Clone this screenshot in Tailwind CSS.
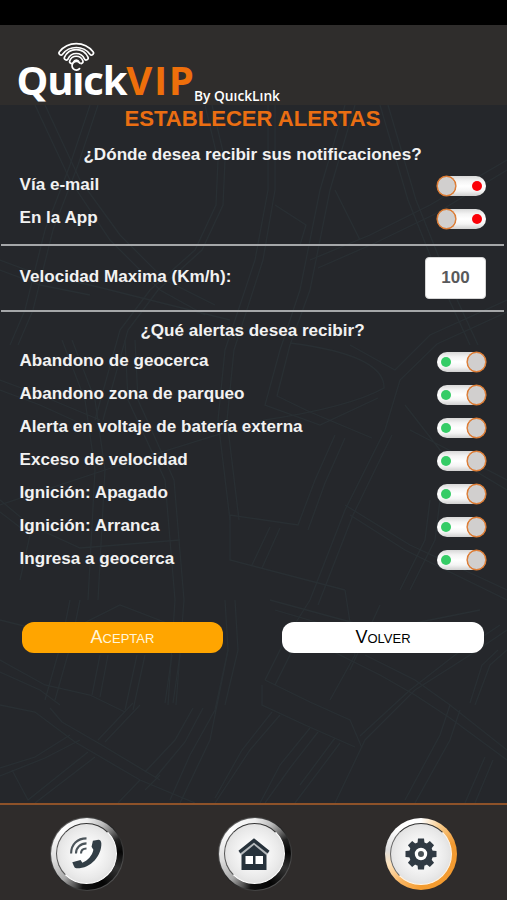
<!DOCTYPE html>
<html lang="es">
<head>
    <meta charset="UTF-8">
    <meta name="viewport" content="width=device-width, initial-scale=1.0">
    <title>Establecer Alertas</title>
    <script src="https://cdn.jsdelivr.net/npm/@tailwindcss/browser@4"></script>
</head>

<body class="bg-black font-['Liberation_Sans',Arial,sans-serif]">
<div class="w-[507px] h-[900px] flex flex-col overflow-hidden">

    <!-- status bar -->
    <div class="h-[25px] bg-black shrink-0"></div>

    <!-- header -->
    <header class="relative z-10 h-[80px] bg-[#2f2d2c] shrink-0">
        <svg class="overflow-visible" width="300" height="80" viewBox="0 25 300 80" role="img" aria-label="QuickVIP">
            <g fill="none" stroke="#fff" stroke-linecap="round">
                <g stroke-width="5.600">
                    <path d="M61 53A19.300 19.300 0 0 1 91.500 53"/>
                    <path d="M66.300 58A10.900 10.900 0 0 1 86.200 58"/>
                    <path d="M71.600 61.500A5 5 0 0 1 81 61.500"/>
                </g>
                <g stroke="#2f2d2c" stroke-width="2.300">
                    <path d="M61 53A19.300 19.300 0 0 1 91.500 53"/>
                    <path d="M66.300 58A10.900 10.900 0 0 1 86.200 58"/>
                    <path d="M71.600 61.500A5 5 0 0 1 81 61.500"/>
                </g>
                <circle cx="76.300" cy="65.800" r="4.500" fill="#2f2d2c" stroke="none"/>
                <path d="M79.600 63A4.300 4.300 0 1 0 79.600 68.600" stroke-width="1.700"/>
            </g>
            <text x="16.500" y="95" fill="#fff" font-family="Open Sans, sans-serif" font-weight="700" font-size="40" textLength="179" lengthAdjust="spacingAndGlyphs"><tspan class="tracking-[-1.2px]">Quıck</tspan><tspan class="tracking-[1.6px]" fill="#ee6f0b">VIP</tspan></text>
            <text x="194" y="101" fill="#fff" font-family="Open Sans, sans-serif" font-weight="600" font-size="14" textLength="86" lengthAdjust="spacingAndGlyphs">By QuıckLınk</text>
        </svg>
    </header>

    <main class="relative h-[698px] shrink-0 bg-[#25272b] text-[#f2f2f2]">

        <!-- street map behind the form -->
        <svg class="absolute inset-0" width="507" height="698" viewBox="0 105 507 698" fill="none" stroke="#292f33" stroke-width="1.300">
            <path d="M35 105L70 180 110 240 160 290 205 315M45 105L80 180 120 235 165 280 215 305"/>
            <path d="M90 105L70 165 45 230 25 310 10 345M98 105L78 165 53 230 33 310 18 345"/>
            <path d="M205 105L218 160 216 205 195 250 150 290 120 330 95 420M212 105L225 160 223 205 202 250 158 290 128 330 103 420"/>
            <path d="M268 105V190L255 260 225 350 218 420 230 520M275 105V190L263 260 234 350 227 420 239 520"/>
            <path d="M345 105L320 190 300 290 280 350 265 405 320 425 378 398M355 105L330 190 310 290 290 345 277 396 310 412 372 438"/>
            <path d="M380 105L408 200 440 280 470 345M388 105L416 200 448 280 478 345"/>
            <path d="M507 160L430 205 370 235 310 260M507 170L435 214 375 243 318 268"/>
            <path d="M275 205L306 225 300 245M335 190L360 240"/>
            <path d="M0 260L40 275 90 285 150 300 230 320M0 270L40 285 90 295"/>
            <path d="M507 300L430 335 395 370 350 345M507 312L437 344 400 380 385 430 345 510 310 600M392 435L353 515 318 605"/>
            <path d="M290 343Q385 355 384 388Q350 407 265 420 L120 465 0 505"/>
            <path d="M0 380L40 395 100 420M0 390L40 405 95 430M62 340L85 400 95 470 88 600M72 340L95 400 105 470 98 600"/>
            <path d="M125 340L128 400 165 480 175 600 168 705M135 340L138 400 174 480 184 600 176 705"/>
            <path d="M335 435L315 480 298 525 230 515V560L345 590M345 438L325 483 308 530M270 527L252 565M280 528L262 568"/>
            <path d="M345 505L410 545 507 590M350 515L405 550 507 600M430 500L425 540 400 590M440 500L435 540 410 590"/>
            <path d="M0 500L30 525 80 548 180 540M0 512L30 535 20 580M410 430L507 480M405 405L440 450 507 490"/>
            <path d="M70 600L62 640 45 700M80 600L72 640 55 700M0 620L60 635 120 605 185 630M0 660L45 685 90 695 125 712M0 672L40 690 60 705"/>
            <path d="M100 655L92 695M108 655L100 697M137 655L125 710M145 655L133 710M172 655L165 703M180 655L173 703M225 600L228 650 215 710M235 600L238 650 225 705"/>
            <path d="M0 705L35 712 75 742 140 780 195 803M50 708L62 722 100 744 160 780M140 705L105 742M133 703L98 740"/>
            <path d="M0 768L35 757 70 735M0 776L45 758 80 740M12 770L28 800 88 752M35 803L95 757M140 780L118 803M160 775L145 790"/>
            <path d="M193 708L175 740 145 772M203 708L185 742 155 778M215 710L190 755 170 800M228 650L210 740 180 803"/>
            <path d="M280 715L250 750 215 803M272 712L242 750 215 798M310 728L280 765 260 803M318 732L290 768 265 803M335 738L300 785M340 743L295 803"/>
            <path d="M265 680L310 702 350 720 362 748M262 685V705L305 725 355 747M265 680L285 640 310 600M295 645L275 685"/>
            <path d="M507 630L470 655 415 690 365 740 335 803M500 625L455 655 410 690 360 736M345 590L355 655 330 700M380 605L350 670"/>
            <path d="M330 650L380 675 415 695 450 718 507 760M365 655L415 680 450 705 507 750M450 705L440 735 405 800M460 710L450 740 415 803M485 757L465 803M493 760L475 803"/>
            <path d="M507 650L490 665 475 705M498 650L482 665 470 703M270 600L380 630 480 610M275 610L370 638"/>
        </svg>

        <form class="relative flex flex-col" onsubmit="return false">
            <h1 class="h-[28px] leading-[28px] pr-[2px] text-center text-[22.1px] font-bold text-[#ea6e12]">ESTABLECER ALERTAS</h1>
            <h2 class="h-[35px] pt-[4px] pr-[2px] leading-[35px] text-center text-[17.1px] font-bold">¿Dónde desea recibir sus notificaciones?</h2>
            <div id="channels"></div>

            <div class="h-[2px] mt-[10px] ml-px mr-[3px] bg-[#a5a7a9]"></div>

            <div class="h-[64px] flex justify-between items-center pl-[19.5px] pr-[21px]">
                <label for="speed" class="text-[17.1px] font-bold -mt-[3px]">Velocidad Maxima (Km/h):</label>
                <input id="speed" type="text" value="100" class="w-[61px] h-[42px] -mt-px rounded-[4px] bg-white border border-[#d5d5d5] text-center text-[17px] font-bold text-[#58595b]">
            </div>

            <div class="h-[2px] ml-px mr-[3px] bg-[#a5a7a9]"></div>

            <h2 class="h-[32px] pt-[2px] pr-[2px] leading-[33px] text-center text-[17.1px] font-bold">¿Qué alertas desea recibir?</h2>
            <div id="alerts"></div>

            <div class="flex justify-between mt-[47px] pl-[22px] pr-[23px]">
                <button class="w-[201px] h-[31px] rounded-[12px] bg-[#ffa500] text-[#fff6dc] text-[18px] [font-variant:small-caps]">Aceptar</button>
                <button class="w-[202px] h-[31px] rounded-[12px] bg-white text-black text-[18px] [font-variant:small-caps]">Volver</button>
            </div>
        </form>
    </main>

    <footer class="h-[97px] shrink-0 bg-[#2f2c2b] border-t-2 border-[#8e5229] flex justify-between px-[50px] pt-[12px]">

        <!-- phone -->
        <a href="#" class="w-[74px] h-[74px] rounded-full p-px bg-[linear-gradient(135deg,#777,#222_50%,#666)]">
            <div class="w-[72px] h-[72px] rounded-full p-[5px] bg-[conic-gradient(from_0deg,#eee,#bbb_8%,#777_13%,#222_18%,#050505_24%,#333_32%,#050505_42%,#111_52%,#555_56%,#aaa_62%,#ddd_72%,#fff_87%,#eee)]">
                <div class="w-[61px] h-[61px] rounded-full border-[1.5px] border-t-[#333] border-l-[#555] border-r-white border-b-white bg-[radial-gradient(circle,#fff_15%,#e9e9e9_60%,#cfcfcf)] flex items-center justify-center">
                    <svg width="33" height="33" viewBox="0 0 36 36">
                        <path d="M25 4L31 3Q34 3.300 34.200 7C34.500 20 23 34.500 7 34.200Q5 34 4.200 31.500L2.500 27.500L11.500 25L13.500 28C19 26.500 24.500 20 25.500 14L23.500 10.500Z" fill="#323e46"/>
                        <g fill="none" stroke="#4b545a" stroke-width="2.300">
                            <path d="M1.200 18C1.200 8 8 1.500 18 1.500"/>
                            <path d="M6.500 18C6.500 11.500 11.500 7 18 7"/>
                            <path d="M12 18C12 14.500 14.500 12.500 18 12.500"/>
                        </g>
                    </svg>
                </div>
            </div>
        </a>

        <!-- home -->
        <a href="#" class="w-[74px] h-[74px] rounded-full p-px bg-[linear-gradient(135deg,#777,#222_50%,#666)]">
            <div class="w-[72px] h-[72px] rounded-full p-[5px] bg-[conic-gradient(from_0deg,#eee,#bbb_8%,#777_13%,#222_18%,#050505_24%,#333_32%,#050505_42%,#111_52%,#555_56%,#aaa_62%,#ddd_72%,#fff_87%,#eee)]">
                <div class="w-[61px] h-[61px] rounded-full border-[1.5px] border-t-[#333] border-l-[#555] border-r-white border-b-white bg-[radial-gradient(circle,#fff_15%,#e9e9e9_60%,#cfcfcf)] flex items-center justify-center">
                    <svg width="32" height="34" viewBox="0 0 32 34">
                        <path d="M3.500 15L16 6L28.500 15V33H3.500Z" fill="#27323b"/>
                        <path d="M2 16.500L16 5L30 16.500" fill="none" stroke="#b5b9bc" stroke-width="4.500"/>
                        <path d="M1.500 15L16 3.500L30.500 15" fill="none" stroke="#27323b" stroke-width="3.400"/>
                        <path d="M7.500 19H15V27H7.500ZM17.500 19H25V27H17.500Z" fill="#fff"/>
                    </svg>
                </div>
            </div>
        </a>

        <!-- settings, current page -->
        <a href="#" class="w-[72px] h-[74px] pt-px">
            <div class="w-[72px] h-[72px] rounded-full p-[5px] bg-[conic-gradient(from_0deg,#fff,#f7c988_10%,#f19a32_20%,#f49c2f_50%,#f9b562_60%,#fde3bd_70%,#ddd_77%,#fff_88%,#fff)]">
                <div class="w-[62px] h-[62px] rounded-full border-[1.5px] border-t-[#333] border-l-[#666] border-r-[#fff6e8] border-b-[#fff6e8] bg-[radial-gradient(circle,#fff_15%,#e9e9e9_60%,#cfcfcf)] flex items-center justify-center">
                    <svg width="32" height="32" viewBox="-16 -16 32 32">
                        <g fill="#303a43">
                            <circle r="12"/>
                            <path id="tooth" d="M-3.600 -10L-3 -15.500H3L3.600 -10Z"/>
                            <use href="#tooth" transform="rotate(45)"/>
                            <use href="#tooth" transform="rotate(90)"/>
                            <use href="#tooth" transform="rotate(135)"/>
                            <use href="#tooth" transform="rotate(180)"/>
                            <use href="#tooth" transform="rotate(225)"/>
                            <use href="#tooth" transform="rotate(270)"/>
                            <use href="#tooth" transform="rotate(315)"/>
                        </g>
                        <circle r="4.600" fill="#4a5257" stroke="#fff" stroke-width="3.200"/>
                    </svg>
                </div>
            </div>
        </a>
    </footer>
</div>

<script>
    const channels = [
        { name: "Vía e-mail", on: false },
        { name: "En la App", on: false }
    ];

    const alerts = [
        { name: "Abandono de geocerca", on: true },
        { name: "Abandono zona de parqueo", on: true },
        { name: "Alerta en voltaje de batería externa", on: true },
        { name: "Exceso de velocidad", on: true },
        { name: "Ignición: Apagado", on: true },
        { name: "Ignición: Arranca", on: true },
        { name: "Ingresa a geocerca", on: true }
    ];

    const knob = `<span class="w-[19px] h-[20px] rounded-full bg-[#d1cfce] border-[1.5px] border-[#dd7b32] shadow-[0_0_0_0.5px_#dd7b32]"></span>`;
    const greenDot = `<span class="w-[10px] h-[10px] ml-[4px] rounded-full bg-[#35cc66]"></span>`;
    const redDot = `<span class="w-[10px] h-[10px] mr-[4px] rounded-full bg-[#fb0007]"></span>`;

    function renderRows(id, rows) {
        document.getElementById(id).innerHTML = rows.map(row => `
            <div class="h-[33px] flex justify-between items-center pl-[19.5px] pr-[21px]">
                <span class="text-[17.1px] font-bold">${row.name}</span>
                <button type="button" class="w-[49px] h-[20px] mt-[3px] rounded-full flex justify-between items-center bg-[linear-gradient(#d8d8d8,#f4f4f4_25%,#fff_50%,#f4f4f4_75%,#d0d0d0)]">
                    ${row.on ? greenDot + knob : knob + redDot}
                </button>
            </div>
        `).join("");
    }

    renderRows("channels", channels);
    renderRows("alerts", alerts);
</script>
</body>
</html>
